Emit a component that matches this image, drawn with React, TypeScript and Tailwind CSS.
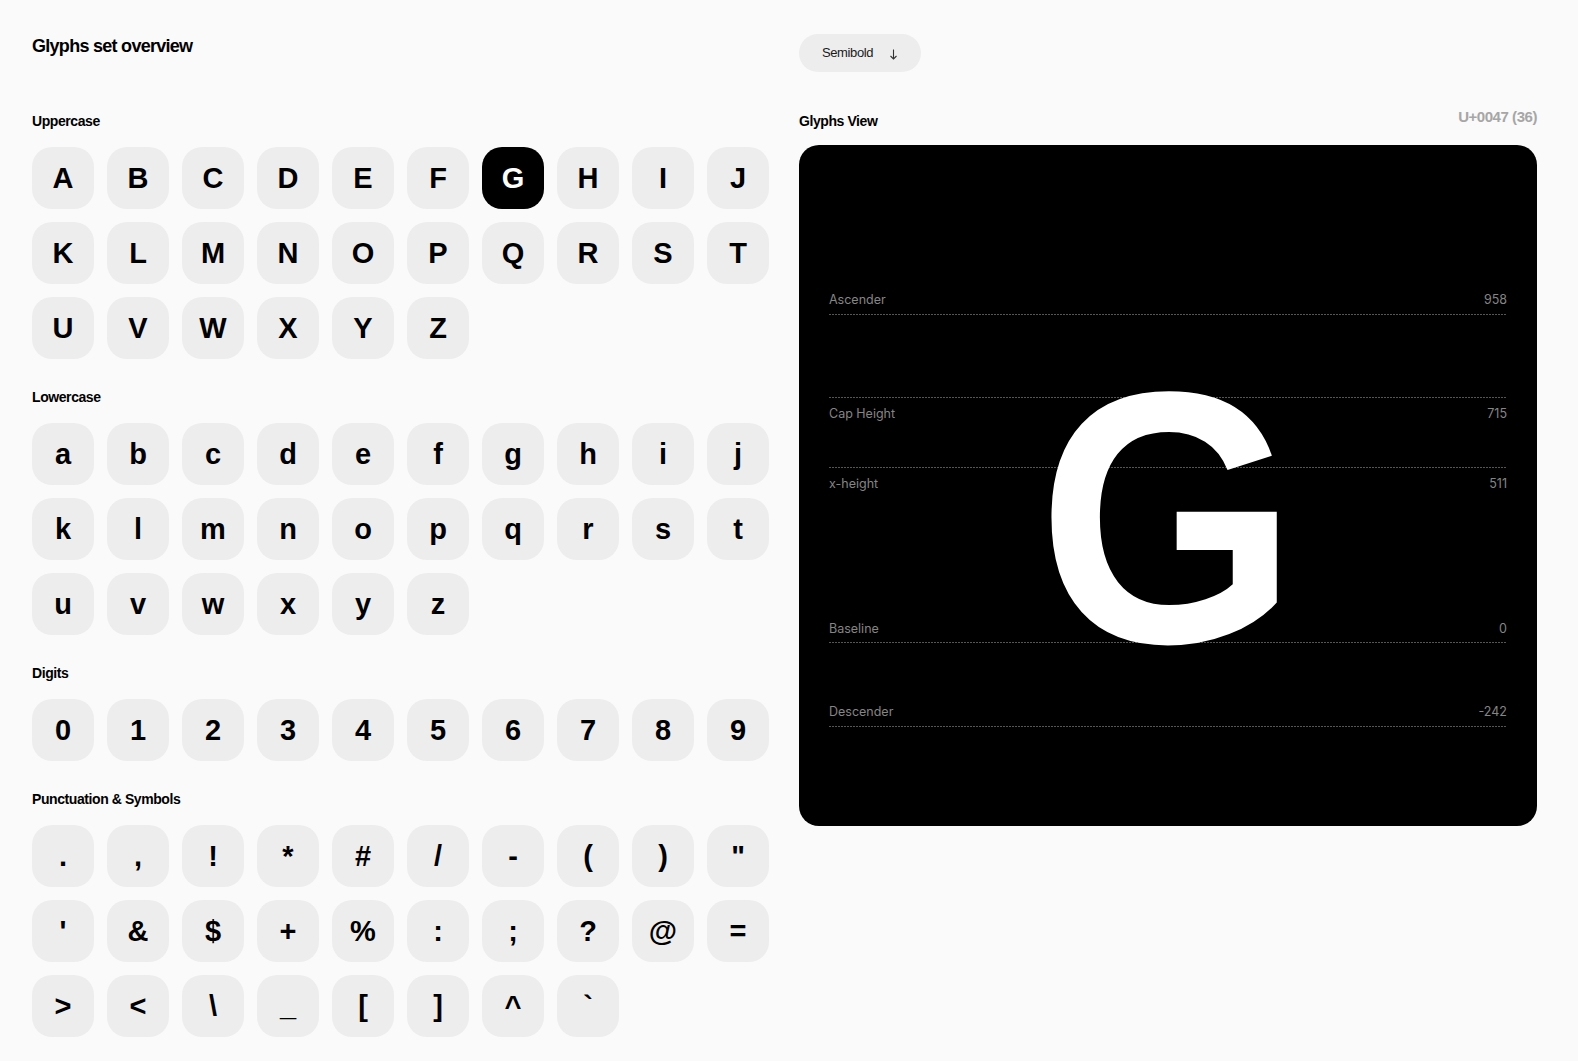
const uppercase = "ABCDEFGHIJKLMNOPQRSTUVWXYZ".split("");
const lowercase = "abcdefghijklmnopqrstuvwxyz".split("");
const digits = "0123456789".split("");
const symbols = [
  ".", ",", "!", "*", "#", "/", "-", "(", ")", '"',
  "'", "&", "$", "+", "%", ":", ";", "?", "@", "=",
  ">", "<", "\\", "_", "[", "]", "^", "`",
];

const sections = [
  { title: "Uppercase", glyphs: uppercase },
  { title: "Lowercase", glyphs: lowercase },
  { title: "Digits", glyphs: digits },
  { title: "Punctuation & Symbols", glyphs: symbols },
];

// line = y of the dashed rule inside the panel, label = top of the text row
const metrics = [
  { name: "Ascender", value: "958", line: 169, label: 146.5 },
  { name: "Cap Height", value: "715", line: 252, label: 260.5 },
  { name: "x-height", value: "511", line: 322, label: 330.5 },
  { name: "Baseline", value: "0", line: 497, label: 475.5 },
  { name: "Descender", value: "-242", line: 581, label: 559 },
];

const selected = "G";

function GlyphTile({ glyph }: { glyph: string }) {
  const active = glyph === selected;
  return (
    <div
      className={`h-[62px] rounded-[20px] flex items-center justify-center text-[29px] font-bold leading-none ${
        active ? "bg-black text-white" : "bg-[#ededed] text-black"
      }`}
    >
      {glyph}
    </div>
  );
}

function ArrowDownSmall() {
  return (
    <svg width="9" height="11" viewBox="0 0 9 11" fill="none" stroke="#333" strokeWidth="1.1">
      <path d="M4.5 0.5V10" />
      <path d="M1.5 7L4.5 10L7.5 7" />
    </svg>
  );
}

export default function App() {
  return (
    <div className="min-h-screen bg-[#fafafa] pl-[32px] pt-[34px] pb-[24px] flex gap-[30px] font-['Liberation_Sans',Arial,sans-serif] text-black">
      <div className="w-[737px] shrink-0">
        <h1 className="text-[18px] leading-[24px] font-bold tracking-[-0.04em]">Glyphs set overview</h1>

        <div className="mt-[53px] flex flex-col gap-[28px]">
          {sections.map((section) => (
            <div key={section.title}>
              <h2 className="text-[14px] leading-[20px] font-bold tracking-[-0.03em] mb-[16px]">
                {section.title}
              </h2>
              <div className="grid grid-cols-10 gap-[13px]">
                {section.glyphs.map((g) => (
                  <GlyphTile key={g} glyph={g} />
                ))}
              </div>
            </div>
          ))}
        </div>
      </div>

      <div className="w-[738px] shrink-0">
        <button className="w-[122px] h-[38px] rounded-full bg-[#ededed] pl-[23px] flex items-center text-[13px] text-[#1a1a1a] tracking-[-0.03em]">
          <span>Semibold</span>
          <span className="ml-[16px] mt-[2px] flex">
            <ArrowDownSmall />
          </span>
        </button>

        <div className="mt-[39px] h-[20px] flex items-start justify-between">
          <h2 className="text-[14px] leading-[20px] font-bold tracking-[-0.03em]">Glyphs View</h2>
          <span className="-mt-[2px] text-[15px] leading-[15px] font-bold tracking-[-0.03em] text-[#a6a6a6]">
            U+0047 (36)
          </span>
        </div>

        <div className="mt-[14px] h-[681px] rounded-[20px] bg-black relative overflow-hidden">
          {metrics.map((m) => (
            <div
              key={m.name + "-line"}
              className="absolute left-[30px] right-[30px] h-px bg-[repeating-linear-gradient(90deg,#555_0_2px,transparent_2px_3px)]"
              style={{ top: m.line }}
            />
          ))}

          <div className="absolute left-0 right-0 top-[193px] text-center text-white font-bold text-[359px] leading-none">
            <span className="inline-block scale-x-[0.93]">G</span>
          </div>

          {metrics.map((m) => (
            <div
              key={m.name}
              className="absolute left-[30px] right-[30px] flex justify-between font-['Inter',sans-serif] text-[12.5px] leading-[16px] text-[#858585]"
              style={{ top: m.label }}
            >
              <span>{m.name}</span>
              <span>{m.value}</span>
            </div>
          ))}
        </div>
      </div>
    </div>
  );
}
